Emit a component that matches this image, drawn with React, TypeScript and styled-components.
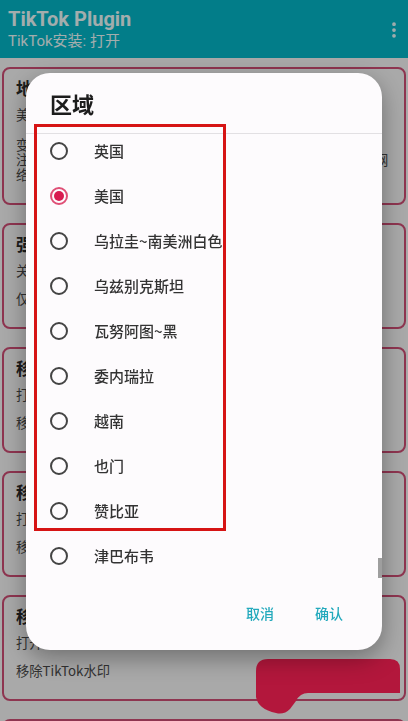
import styled, { createGlobalStyle } from "styled-components";
import { EllipsisVertical } from "lucide-react";

const GlobalStyle = createGlobalStyle`
  * {
    box-sizing: border-box;
  }
  html, body {
    margin: 0;
    padding: 0;
    height: 100%;
    overflow: hidden;
  }
  body {
    background: #f9f9f9;
    font-family: Roboto, "Noto Sans CJK SC", "Noto Sans", sans-serif;
  }
`;

const AppBar = styled.header`
  height: 58px;
  background: #04b8cb;
  padding: 7px 4px 0 8px;
  display: flex;
  justify-content: space-between;
  align-items: flex-start;
  color: #f0ffff;
`;

const AppTitle = styled.div`
  font-size: 20px;
  font-weight: 700;
  line-height: 24px;
`;

const AppSubtitle = styled.div`
  font-size: 15px;
  line-height: 20px;
  font-family: Roboto, "Noto Sans CJK SC", sans-serif;
`;

const MenuButton = styled.div`
  margin-top: 13px;
  display: flex;
  color: #f0ffff;
`;

const CardList = styled.main`
  padding: 9px 2px;
  display: flex;
  flex-direction: column;
  gap: 18px;
`;

const Card = styled.section`
  border: 2px solid #d24e76;
  border-radius: 8px;
  padding: 8px 12px 21px;
  color: #4a4a4a;
  font-family: "Noto Sans CJK SC", sans-serif;
`;

const CardTitle = styled.div`
  font-size: 17px;
  font-weight: 700;
  line-height: 22px;
  color: #2a2a2a;
`;

const CardStatus = styled.div`
  margin-top: 6px;
  font-size: 13.3px;
  line-height: 20px;
`;

const CardDesc = styled.div<{ $gap: number }>`
  margin-top: ${(p) => p.$gap}px;
  font-size: 13.3px;
  line-height: 15px;
  white-space: pre-line;
`;

const Scrim = styled.div`
  position: fixed;
  inset: 0;
  background: rgba(0, 0, 0, 0.32);
  z-index: 1;
`;

const Fab = styled.div`
  position: fixed;
  left: 256px;
  top: 659px;
  z-index: 1;
  display: flex;
`;

const Dialog = styled.div`
  position: fixed;
  left: 26px;
  top: 73px;
  width: 356px;
  height: 577px;
  border-radius: 24px;
  background: #fdfbfd;
  box-shadow: 0 8px 24px rgba(0, 0, 0, 0.35);
  display: flex;
  flex-direction: column;
  z-index: 2;
  font-family: "Noto Sans CJK SC", sans-serif;
`;

const DialogTitle = styled.h2`
  margin: 0;
  height: 60px;
  padding-left: 24px;
  display: flex;
  align-items: center;
  font-size: 22px;
  font-weight: 700;
  color: #1c1c1c;
`;

const Divider = styled.div`
  height: 1px;
  background: #e2e0e3;
`;

const OptionList = styled.div`
  position: relative;
  height: 449px;
  overflow: hidden;
`;

const OptionScroll = styled.div`
  margin-top: -6px;
`;

const Option = styled.div`
  height: 45px;
  display: flex;
  align-items: center;
  padding-left: 24px;
  gap: 26px;
`;

const Radio = styled.span<{ $checked: boolean }>`
  width: 18px;
  height: 18px;
  flex: none;
  border-radius: 50%;
  border: 2px solid ${(p) => (p.$checked ? "#df4f76" : "#444444")};
  display: flex;
  align-items: center;
  justify-content: center;

  &::after {
    content: "";
    width: 10px;
    height: 10px;
    border-radius: 50%;
    background: #d81b50;
    display: ${(p) => (p.$checked ? "block" : "none")};
  }
`;

const OptionLabel = styled.span`
  font-size: 15px;
  font-weight: 500;
  color: #333;
  white-space: nowrap;
  overflow: hidden;
  max-width: 128px;
`;

const ScrollThumb = styled.div`
  position: absolute;
  right: 0;
  top: 424px;
  width: 4px;
  height: 20px;
  background: #9e9e9e;
`;

const Footer = styled.div`
  flex: 1;
  display: flex;
  justify-content: flex-end;
  align-items: flex-start;
  padding: 12px 31px 0 0;
  gap: 25px;
`;

const TextButton = styled.button`
  height: 36px;
  padding: 0 8px;
  border: none;
  background: none;
  color: #22a9bc;
  font-family: "Noto Sans CJK SC", sans-serif;
  font-size: 14px;
  font-weight: 500;
`;

const Annotation = styled.div`
  position: absolute;
  left: 8px;
  top: 51px;
  width: 192px;
  height: 407px;
  border: 3px solid #d61414;
  pointer-events: none;
`;

const cards = [
  {
    title: "地区",
    status: "美国",
    desc: "变更地区后需要清除抖音国际版的数据并重新启动应用才生效\n注意需要配合对应地区的代理节点使用否则可能无法正常访问网\n络，切换后请重新打开应用",
    gap: 12,
  },
  { title: "强制使用代理", status: "关闭", desc: "仅在部分地区有效", gap: 10 },
  { title: "移除广告", status: "打开", desc: "移除TikTok中的广告", gap: 10 },
  { title: "移除直播", status: "打开", desc: "移除TikTok中的直播", gap: 10 },
  { title: "移除水印", status: "打开", desc: "移除TikTok水印", gap: 10 },
  { title: "下载设置", status: "打开", desc: "下载无水印视频", gap: 10 },
];

const regions = [
  "英国",
  "美国",
  "乌拉圭~南美洲白色",
  "乌兹别克斯坦",
  "瓦努阿图~黑",
  "委内瑞拉",
  "越南",
  "也门",
  "赞比亚",
  "津巴布韦",
  "南极洲",
];

const App = () => {
  return (
    <>
      <GlobalStyle />
      <AppBar>
        <div>
          <AppTitle>TikTok Plugin</AppTitle>
          <AppSubtitle>TikTok安装: 打开</AppSubtitle>
        </div>
        <MenuButton>
          <EllipsisVertical size={20} strokeWidth={2.5} />
        </MenuButton>
      </AppBar>

      <CardList>
        {cards.map((card, i) => (
          <Card key={i}>
            <CardTitle>{card.title}</CardTitle>
            <CardStatus>{card.status}</CardStatus>
            <CardDesc $gap={card.gap}>{card.desc}</CardDesc>
          </Card>
        ))}
      </CardList>

      <Scrim />

      <Fab>
        <svg width="146" height="56" viewBox="0 0 146 56">
          <path
            d="M12 0 H134 Q144 0 144 10 V34 H52 Q44 34 40 42 L34 50 Q28 56 20 54 Q2 50 0 38 V12 Q0 0 12 0 Z"
            fill="#b3173c"
          />
        </svg>
      </Fab>

      <Dialog>
        <DialogTitle>区域</DialogTitle>
        <Divider />
        <OptionList>
          <OptionScroll>
            {regions.map((name, i) => (
              <Option key={i}>
                <Radio $checked={name === "美国"} />
                <OptionLabel>{name}</OptionLabel>
              </Option>
            ))}
          </OptionScroll>
          <ScrollThumb />
        </OptionList>
        <Footer>
          <TextButton>取消</TextButton>
          <TextButton>确认</TextButton>
        </Footer>
        <Annotation />
      </Dialog>
    </>
  );
};

export default App;
